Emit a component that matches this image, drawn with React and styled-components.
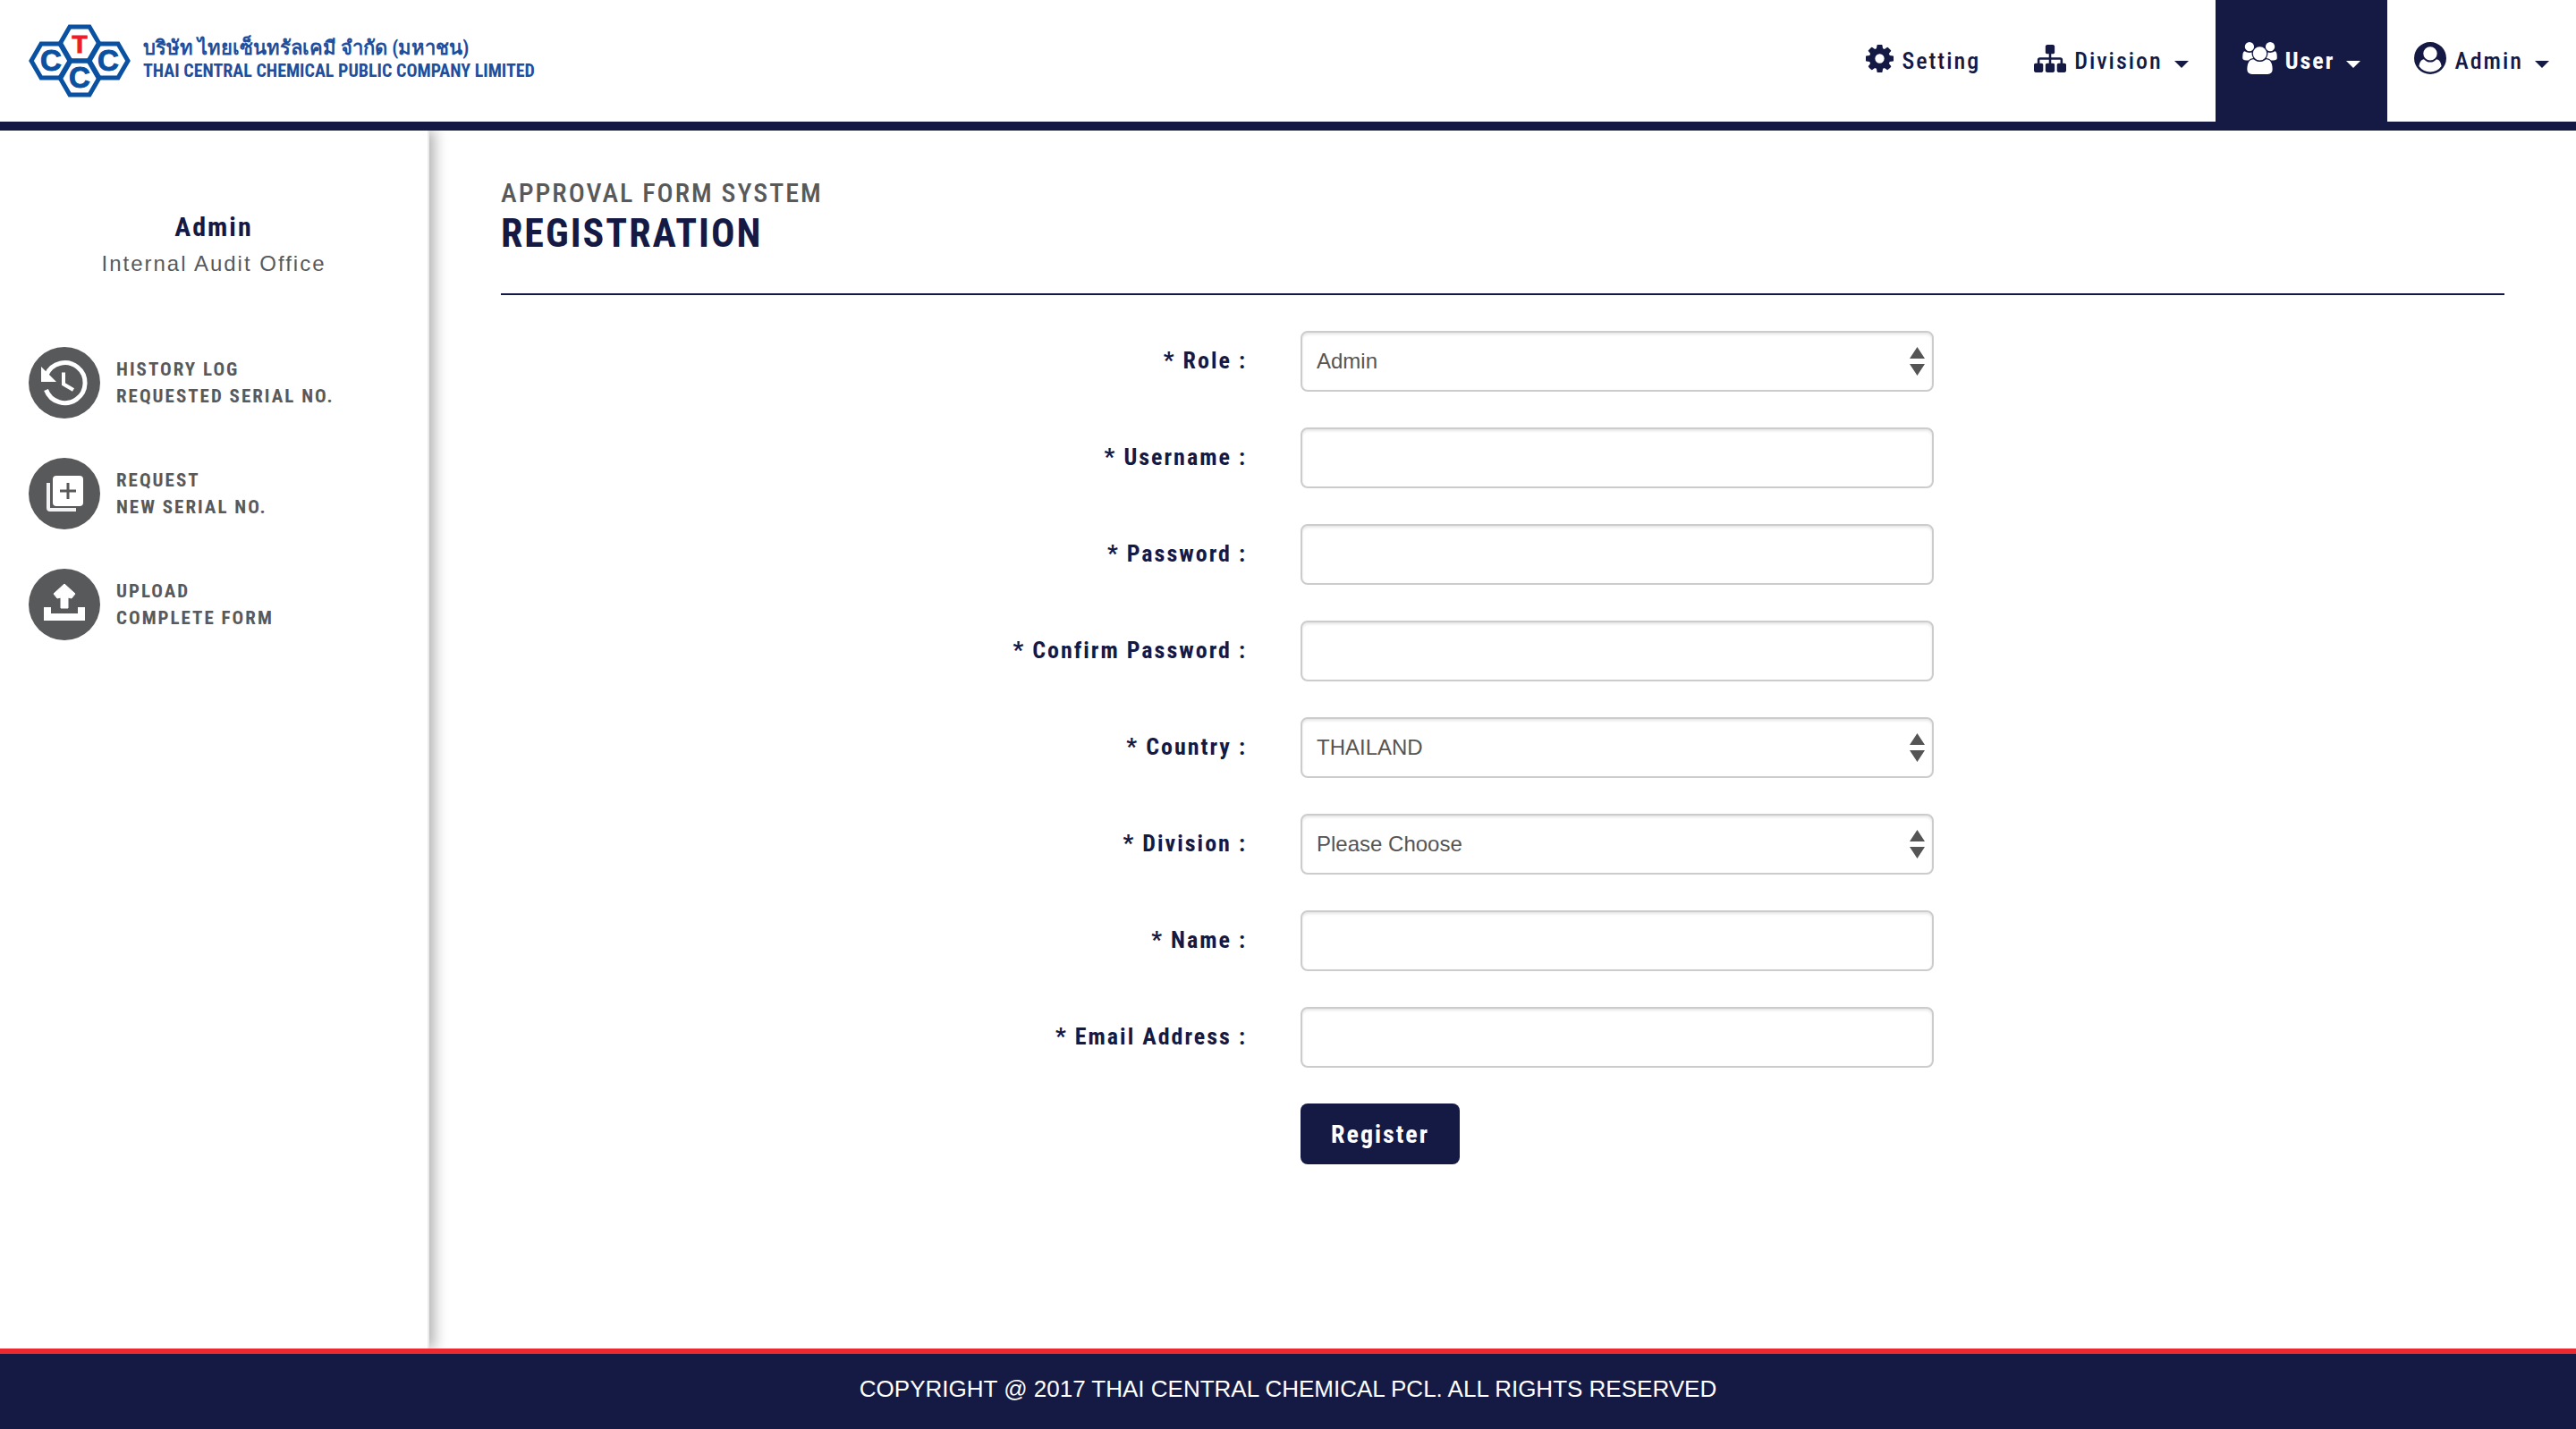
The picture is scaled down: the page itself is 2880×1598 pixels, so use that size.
import React from "react";
import styled, { createGlobalStyle, css } from "styled-components";

const navy = "#151a45";
const grey = "#58595b";
const condensed = `"Roboto Condensed", Roboto, "Liberation Sans", sans-serif`;
const regular = `"Liberation Sans", Arial, sans-serif`;

const GlobalStyle = createGlobalStyle`
  * { box-sizing: border-box; }
  body { margin: 0; background: #fff; font-family: ${regular}; color: ${grey}; }
  h1, p, ul { margin: 0; padding: 0; }
  ul { list-style: none; }
  a { color: inherit; text-decoration: none; }
`;

const tracked = css`
  font-family: ${condensed};
  letter-spacing: 2px;
`;

const Page = styled.div`
  display: flex;
  flex-direction: column;
  min-height: 100vh;
`;

const Header = styled.header`
  position: relative;
  z-index: 1;
  display: flex;
  justify-content: space-between;
  height: 146px;
  border-bottom: 10px solid ${navy};
  background: #fff;
`;

const Brand = styled.a`
  display: flex;
  align-items: center;
  gap: 14px;
  padding-left: 32px;
`;

const BrandText = styled.span`
  display: flex;
  flex-direction: column;
  padding-bottom: 4px;
  color: #1f4f9c;
  font-family: ${condensed};
  white-space: nowrap;
`;

const ThaiName = styled.span`
  font-size: 22px;
  font-weight: 700;
  line-height: 26px;
`;

const EnglishName = styled.span`
  font-size: 20px;
  font-weight: 700;
  line-height: 24px;
`;

const Nav = styled.nav`
  display: flex;
`;

const NavItem = styled.a`
  ${tracked}
  display: flex;
  align-items: center;
  padding: 0 30px;
  background: ${(p) => (p.$active ? navy : "transparent")};
  color: ${(p) => (p.$active ? "#fff" : navy)};
  font-size: 26px;
  font-weight: ${(p) => (p.$active ? 700 : 500)};
`;

const NavIcon = styled.svg`
  margin: 0 9px 6px 0;
  fill: currentColor;
`;

const Caret = styled.svg`
  margin: 8px 0 0 13px;
  fill: currentColor;
`;

const Body = styled.div`
  display: flex;
  flex: 1;
`;

const Sidebar = styled.aside`
  flex: none;
  width: 480px;
  padding: 88px 32px 0;
  border-right: 2px solid #ebebeb;
  box-shadow: 6px 0 14px rgba(0, 0, 0, 0.3);
`;

const ProfileName = styled.p`
  ${tracked}
  color: ${navy};
  font-size: 30px;
  font-weight: 700;
  line-height: 40px;
  text-align: center;
`;

const ProfileOffice = styled.p`
  font-size: 24px;
  letter-spacing: 2px;
  line-height: 42px;
  text-align: center;
`;

const SideMenu = styled.ul`
  display: flex;
  flex-direction: column;
  gap: 44px;
  margin-top: 72px;
`;

const SideLink = styled.a`
  ${tracked}
  display: flex;
  align-items: center;
  gap: 18px;
  font-size: 21px;
  font-weight: 700;
  line-height: 30px;
`;

const Main = styled.main`
  flex: 1;
  padding: 50px 80px 40px;
`;

const TitleBlock = styled.div`
  padding-bottom: 42px;
  border-bottom: 2px solid ${navy};
`;

const Overline = styled.p`
  ${tracked}
  font-size: 30px;
  font-weight: 500;
  line-height: 40px;
`;

const Title = styled.h1`
  ${tracked}
  color: ${navy};
  font-size: 44px;
  font-weight: 700;
  line-height: 50px;
`;

const Form = styled.form`
  display: flex;
  flex-direction: column;
  gap: 40px;
  margin-top: 40px;
`;

const Row = styled.div`
  display: grid;
  grid-template-columns: 447fr 354fr 319fr;
  align-items: center;
`;

const Label = styled.label`
  ${tracked}
  padding: 0 60px 2px 0;
  color: ${navy};
  font-size: 26px;
  font-weight: 700;
  text-align: right;
`;

const control = css`
  width: 100%;
  height: 68px;
  padding: 0 16px 2px;
  border: 2px solid #ccc;
  border-radius: 8px;
  background: #fff;
  box-shadow: inset 0 2px 3px rgba(0, 0, 0, 0.1);
  color: #555;
  font-family: ${regular};
  font-size: 24px;
`;

const TextBox = styled.input`
  ${control}
`;

const SelectWrap = styled.div`
  position: relative;
`;

const Select = styled.select`
  ${control}
  display: block;
  appearance: none;
`;

const SelectArrows = styled.svg`
  position: absolute;
  top: 18px;
  right: 10px;
  fill: #555;
  pointer-events: none;
`;

const Submit = styled.button`
  ${tracked}
  grid-column: 2;
  justify-self: start;
  height: 68px;
  padding: 0 34px;
  border: 0;
  border-radius: 8px;
  background: ${navy};
  color: #fff;
  font-size: 28px;
  font-weight: 700;
`;

const Footer = styled.footer`
  position: relative;
  z-index: 1;
  padding: 20px 0 26px;
  border-top: 6px solid #ea2a2e;
  background: ${navy};
  color: #fff;
  font-size: 26px;
  line-height: 38px;
  text-align: center;
`;

const hexagon = (cx, cy) =>
  [[-11, -19], [11, -19], [22, 0], [11, 19], [-11, 19], [-22, 0]]
    .map(([dx, dy]) => `${cx + dx},${cy + dy}`)
    .join(" ");

function Logo() {
  const cells = [
    { x: 57, y: 22, letter: "T", size: 28, fill: "#ec1c2e", base: 32 },
    { x: 25, y: 41, letter: "C", size: 33, fill: "#0b51a1", base: 52 },
    { x: 89, y: 41, letter: "C", size: 33, fill: "#0b51a1", base: 52 },
    { x: 57, y: 60, letter: "C", size: 33, fill: "#0b51a1", base: 71 },
  ];
  return (
    <svg width="114" height="82" viewBox="0 0 114 82" aria-hidden="true">
      {cells.map((c) => (
        <g key={`${c.x}-${c.y}`}>
          <polygon points={hexagon(c.x, c.y)} fill="none" stroke="#0b51a1" strokeWidth="5" />
          <text
            x={c.x}
            y={c.base}
            textAnchor="middle"
            fontFamily="Liberation Sans, sans-serif"
            fontWeight="700"
            fontSize={c.size}
            fill={c.fill}
            stroke={c.fill}
            strokeWidth="1"
          >
            {c.letter}
          </text>
        </g>
      ))}
    </svg>
  );
}

const navIcons = {
  cog: {
    box: "128 128 1536 1536", w: 31, h: 31,
    d: "M1152 896q0-106-75-181t-181-75-181 75-75 181 75 181 181 75 181-75 75-181zm512-109v222q0 12-8 23t-20 13l-185 28q-19 54-39 91 35 50 107 138 10 12 10 25t-9 23q-27 37-99 108t-94 71q-12 0-26-9l-138-108q-44 23-91 38-16 136-29 186-7 28-36 28h-222q-14 0-24.5-8.5t-11.5-21.5l-28-184q-49-16-90-37l-141 107q-10 9-25 9-14 0-25-11-126-114-165-168-7-10-7-23 0-12 8-23 15-21 51-66.5t54-70.5q-27-50-41-99l-183-27q-13-2-21-12.5t-8-23.5v-222q0-12 8-23t19-13l186-28q14-46 39-92-40-57-107-138-10-12-10-24 0-10 9-23 26-36 98.5-107.5t94.5-71.5q13 0 26 10l138 107q44-23 91-38 16-136 29-186 7-28 36-28h222q14 0 24.5 8.5t11.5 21.5l28 184q49 16 90 37l142-107q9-9 24-9 13 0 25 10 129 119 165 170 7 8 7 22 0 12-8 23-15 21-51 66.5t-54 70.5q26 50 41 98l183 28q13 2 21 12.5t8 23.5z",
  },
  sitemap: {
    box: "0 128 1792 1536", w: 36, h: 31,
    d: "M1792 1248v320q0 40-28 68t-68 28h-320q-40 0-68-28t-28-68v-320q0-40 28-68t68-28h96v-192h-512v192h96q40 0 68 28t28 68v320q0 40-28 68t-68 28h-320q-40 0-68-28t-28-68v-320q0-40 28-68t68-28h96v-192h-512v192h96q40 0 68 28t28 68v320q0 40-28 68t-68 28h-320q-40 0-68-28t-28-68v-320q0-40 28-68t68-28h96v-192q0-52 38-90t90-38h512v-192h-96q-40 0-68-28t-28-68v-320q0-40 28-68t68-28h320q40 0 68 28t28 68v320q0 40-28 68t-68 28h-96v192h512q52 0 90 38t38 90v192h96q40 0 68 28t28 68z",
  },
  users: {
    box: "0 0 1920 1792", w: 39, h: 36,
    d: "M593 896q-162 5-265 128h-134q-82 0-138-40.5t-56-118.5q0-353 124-353 6 0 43.5 21t97.5 42.5 119 21.5q67 0 133-23-5 37-5 66 0 139 81 256zm1071 637q0 120-73 189.5t-194 69.5h-874q-121 0-194-69.5t-73-189.5q0-53 3.5-103.5t14-109 26.5-108.5 43-97.5 62-81 85.5-53.5 111.5-20q10 0 43 21.5t73 48 107 48 135 21.5 135-21.5 107-48 73-48 43-21.5q61 0 111.5 20t85.5 53.5 62 81 43 97.5 26.5 108.5 14 109 3.5 103.5zm-1024-1277q0 106-75 181t-181 75-181-75-75-181 75-181 181-75 181 75 75 181zm704 384q0 159-112.5 271.5t-271.5 112.5-271.5-112.5-112.5-271.5 112.5-271.5 271.5-112.5 271.5 112.5 112.5 271.5zm576 225q0 78-56 118.5t-138 40.5h-134q-103-123-265-128 81-117 81-256 0-29-5-66 66 23 133 23 59 0 119-21.5t97.5-42.5 43.5-21q124 0 124 353zm-128-609q0 106-75 181t-181 75-181-75-75-181 75-181 181-75 181 75 75 181z",
  },
  account: {
    box: "0 0 1792 1792", w: 36, h: 36,
    d: "M1523 1339q-22-155-87.5-257.5t-184.5-118.5q-67 74-159.5 115.5t-195.5 41.5-195.5-41.5-159.5-115.5q-119 16-184.5 118.5t-87.5 257.5q106 150 271 237.5t356 87.5 356-87.5 271-237.5zm-243-699q0-159-112.5-271.5t-271.5-112.5-271.5 112.5-112.5 271.5 112.5 271.5 271.5 112.5 271.5-112.5 112.5-271.5zm512 256q0 182-71 347.5t-190.5 286-285.5 191.5-349 71-349-71-285.5-191-190.5-286-71-348 71-348 191-286 286-191 348-71 348 71 286 191 191 286 71 348z",
  },
};

const navItems = [
  { icon: "cog", label: "Setting" },
  { icon: "sitemap", label: "Division", menu: true },
  { icon: "users", label: "User", menu: true, active: true },
  { icon: "account", label: "Admin", menu: true },
];

const HistoryIcon = () => (
  <svg width="80" height="80" viewBox="0 0 80 80" aria-hidden="true">
    <circle cx="40" cy="40" r="40" fill={grey} />
    <path d="M20 31A22.500 22.500 0 1 1 19.500 48" fill="none" stroke="#fff" strokeWidth="5" />
    <path d="M14 22v17h17z" fill="#fff" />
    <path d="M39 28.500v13l11 6.500" fill="none" stroke="#fff" strokeWidth="4" />
  </svg>
);

const RequestIcon = () => (
  <svg width="80" height="80" viewBox="0 0 80 80" aria-hidden="true">
    <circle cx="40" cy="40" r="40" fill={grey} />
    <rect x="27" y="20" width="34" height="34" rx="4" fill="#fff" />
    <path d="M44 28v18M35 37h18" stroke={grey} strokeWidth="3" />
    <path d="M22 28v28q0 2 2 2h29" fill="none" stroke="#f2f2f2" strokeWidth="4" />
  </svg>
);

const UploadIcon = () => (
  <svg width="80" height="80" viewBox="0 0 80 80" aria-hidden="true">
    <circle cx="40" cy="40" r="40" fill={grey} />
    <path d="M36 44V32l-4 1-4-5 12-11 12 11-4 5-4-1v12z" fill="#fff" stroke="#fff" strokeLinejoin="round" />
    <path d="M17 43h8v7h30v-7h8v15H17z" fill="#fff" />
  </svg>
);

const sideItems = [
  { Icon: HistoryIcon, lines: ["HISTORY LOG", "REQUESTED SERIAL NO."] },
  { Icon: RequestIcon, lines: ["REQUEST", "NEW SERIAL NO."] },
  { Icon: UploadIcon, lines: ["UPLOAD", "COMPLETE FORM"] },
];

const fields = [
  { id: "role", label: "Role", options: ["Admin", "User"] },
  { id: "username", label: "Username", type: "text" },
  { id: "password", label: "Password", type: "password" },
  { id: "confirm", label: "Confirm Password", type: "password" },
  { id: "country", label: "Country", options: ["THAILAND"] },
  { id: "division", label: "Division", options: ["Please Choose"] },
  { id: "name", label: "Name", type: "text" },
  { id: "email", label: "Email Address", type: "email" },
];

function Field({ id, label, type, options }) {
  return (
    <Row>
      <Label htmlFor={id}>* {label} :</Label>
      {options ? (
        <SelectWrap>
          <Select id={id} name={id}>
            {options.map((o) => (
              <option key={o}>{o}</option>
            ))}
          </Select>
          <SelectArrows width="17" height="32" viewBox="0 0 17 32" aria-hidden="true">
            <path d="M8.500 0L17 13H0zM0 19h17L8.500 32z" />
          </SelectArrows>
        </SelectWrap>
      ) : (
        <TextBox id={id} name={id} type={type} />
      )}
    </Row>
  );
}

export default function App() {
  return (
    <Page>
      <GlobalStyle />
      <Header>
        <Brand href="#home">
          <Logo />
          <BrandText>
            <ThaiName lang="th">บริษัท ไทยเซ็นทรัลเคมี จำกัด (มหาชน)</ThaiName>
            <EnglishName>THAI CENTRAL CHEMICAL PUBLIC COMPANY LIMITED</EnglishName>
          </BrandText>
        </Brand>
        <Nav>
          {navItems.map(({ icon, label, menu, active }) => (
            <NavItem key={label} href={`#${label.toLowerCase()}`} $active={active}>
              <NavIcon
                width={navIcons[icon].w}
                height={navIcons[icon].h}
                viewBox={navIcons[icon].box}
                aria-hidden="true"
              >
                <path d={navIcons[icon].d} />
              </NavIcon>
              {label}
              {menu && (
                <Caret width="16" height="8" viewBox="0 0 16 8" aria-hidden="true">
                  <path d="M0 0h16L8 8z" />
                </Caret>
              )}
            </NavItem>
          ))}
        </Nav>
      </Header>
      <Body>
        <Sidebar>
          <ProfileName>Admin</ProfileName>
          <ProfileOffice>Internal Audit Office</ProfileOffice>
          <SideMenu>
            {sideItems.map(({ Icon, lines }) => (
              <li key={lines[0]}>
                <SideLink href={`#${lines[0].toLowerCase().replace(" ", "-")}`}>
                  <Icon />
                  <span>
                    {lines[0]}
                    <br />
                    {lines[1]}
                  </span>
                </SideLink>
              </li>
            ))}
          </SideMenu>
        </Sidebar>
        <Main>
          <TitleBlock>
            <Overline>APPROVAL FORM SYSTEM</Overline>
            <Title>REGISTRATION</Title>
          </TitleBlock>
          <Form onSubmit={(e) => e.preventDefault()}>
            {fields.map((f) => (
              <Field key={f.id} {...f} />
            ))}
            <Row>
              <Submit type="submit">Register</Submit>
            </Row>
          </Form>
        </Main>
      </Body>
      <Footer>COPYRIGHT @ 2017 THAI CENTRAL CHEMICAL PCL. ALL RIGHTS RESERVED</Footer>
    </Page>
  );
}
